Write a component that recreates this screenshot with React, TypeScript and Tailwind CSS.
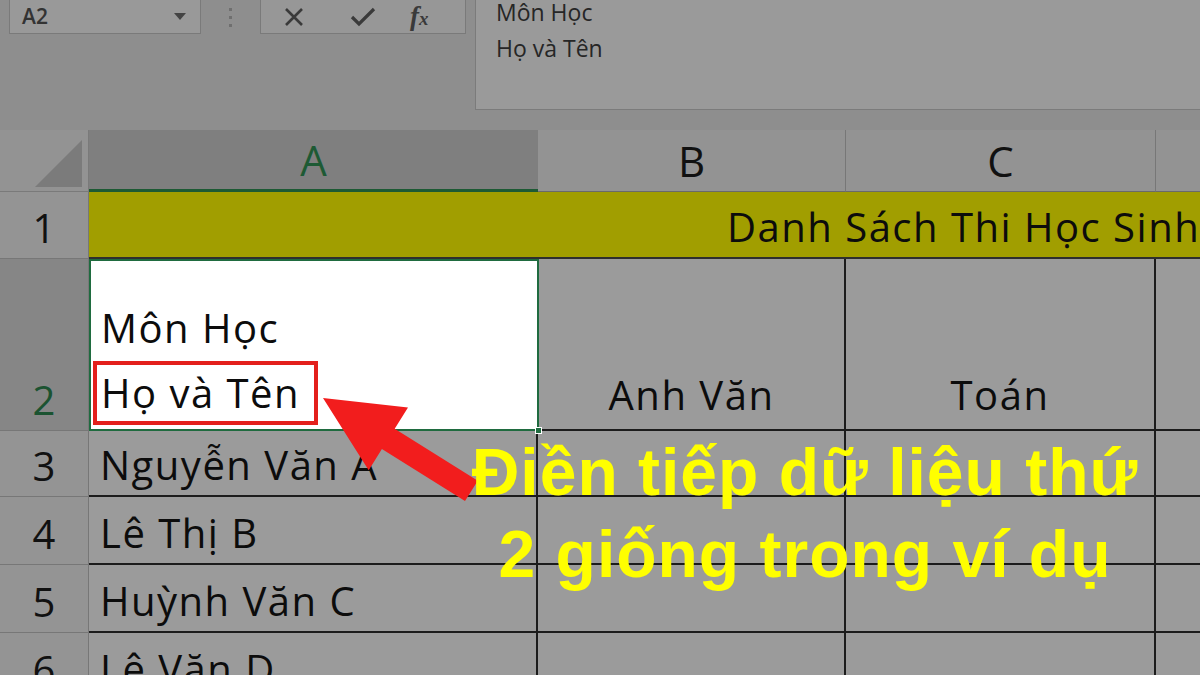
import React from "react";

// Excel grid, dimmed, with callout on top
const cellText = "text-[40px] tracking-[1.5px] text-[#0c0c0c] leading-none";

const RowHead = ({
  n,
  selected = false,
  className = "",
}: {
  n: number;
  selected?: boolean;
  className?: string;
}) => (
  <div
    className={`w-[89px] shrink-0 flex items-end justify-center pb-[10px] border-r border-b border-[#777777] text-[40px] leading-none ${
      selected ? "bg-[#868686] text-[#1b5331]" : "bg-[#949494] text-[#111111]"
    } ${className}`}
  >
    {n}
  </div>
);

const DataRow = ({ n, name, h }: { n: number; name: string; h: string }) => (
  <div className={`flex ${h}`}>
    <RowHead n={n} />
    <div className={`w-[449px] shrink-0 bg-[#9b9b9b] border-r-2 border-b-2 border-[#1c1c1c] flex items-end pl-[11px] pb-[10px] ${cellText}`}>
      {name}
    </div>
    <div className="w-[308px] shrink-0 bg-[#9b9b9b] border-r-2 border-b-2 border-[#1c1c1c]" />
    <div className="w-[310px] shrink-0 bg-[#9b9b9b] border-r-2 border-b-2 border-[#1c1c1c]" />
    <div className="flex-1 bg-[#9b9b9b] border-b-2 border-[#1c1c1c]" />
  </div>
);

export default function App() {
  return (
    <div className="relative w-[1200px] h-[675px] overflow-hidden bg-[#8e8e8e] font-['Open_Sans',sans-serif]">
      {/* Formula bar */}
      <div className="flex h-[110px]">
        <div className="flex w-[475px] shrink-0 items-start pl-[9px]">
          <div className="w-[192px] h-[35px] -mt-px bg-[#999999] border border-[#7a7a7a] flex items-center justify-between pl-[12px] pr-[14px]">
            <span className="text-[21px] font-semibold text-[#333333] leading-none">A2</span>
            <svg width="12" height="8" viewBox="0 0 12 8">
              <polygon points="0,0 12,0 6,7" fill="#444444" />
            </svg>
          </div>
          <div className="w-[59px] h-[35px] flex flex-col items-center justify-center gap-[5px]">
            <span className="w-[3px] h-[3px] bg-[#6f6f6f]" />
            <span className="w-[3px] h-[3px] bg-[#6f6f6f]" />
            <span className="w-[3px] h-[3px] bg-[#6f6f6f]" />
          </div>
          <div className="w-[206px] h-[35px] -mt-px bg-[#979797] border border-[#7a7a7a] flex items-center pl-[22px]">
            <svg width="22" height="22" viewBox="0 0 22 22" className="mr-[45px]">
              <path d="M3 3 L19 19 M19 3 L3 19" stroke="#3a3a3a" strokeWidth="2.6" />
            </svg>
            <svg width="26" height="22" viewBox="0 0 26 22" className="mr-[34px]">
              <path d="M2 11 L9 18 L24 3" stroke="#3a3a3a" strokeWidth="3.2" fill="none" />
            </svg>
            <span className="font-['Liberation_Serif',serif] italic font-bold text-[27px] leading-none text-[#3a3a3a]">
              f<span className="text-[19px]">x</span>
            </span>
          </div>
        </div>
        <div className="flex-1 flex flex-col gap-[13px] bg-[#9a9a9a] border-l border-b border-[#7b7b7b] pl-[20px] pt-[1px] text-[23px] leading-none text-[#262626]">
          <div>Môn Học</div>
          <div>Họ và Tên</div>
        </div>
      </div>
      <div className="h-[20px]" />

      {/* Column headers */}
      <div className="flex h-[62px]">
        <div className="w-[89px] shrink-0 bg-[#939393] border-r border-b border-[#7a7a7a] flex items-end justify-end pr-[6px] pb-[4px]">
          <svg width="47" height="47" viewBox="0 0 47 47">
            <polygon points="47,0 47,47 0,47" fill="#7b7b7b" />
          </svg>
        </div>
        <div className="w-[449px] shrink-0 bg-[#7f7f7f] border-b-[3px] border-[#1d5a34] flex items-center justify-center text-[42px] leading-none text-[#1d5a34]">
          A
        </div>
        <div className="w-[308px] shrink-0 bg-[#939393] border-r border-[#777777] border-b border-b-[#6a6a6a] flex items-center justify-center text-[42px] leading-none text-[#111111]">
          B
        </div>
        <div className="w-[310px] shrink-0 bg-[#939393] border-r border-[#777777] border-b border-b-[#6a6a6a] flex items-center justify-center text-[42px] leading-none text-[#111111]">
          C
        </div>
        <div className="flex-1 bg-[#939393] border-b border-[#6a6a6a]" />
      </div>

      {/* Row 1 */}
      <div className="flex h-[67px]">
        <RowHead n={1} />
        <div className={`flex-1 bg-[#a19e00] border-b-2 border-[#2e2e2e] flex items-end pl-[638px] pb-[10px] whitespace-nowrap ${cellText}`}>
          Danh Sách Thi Học Sinh
        </div>
      </div>

      {/* Row 2 */}
      <div className="flex h-[172px]">
        <RowHead n={2} selected />
        <div className="relative w-[450px] shrink-0 bg-white border-2 border-[#1f6b3f] flex flex-col justify-end pl-[2px] pb-[4px]">
          <div className={`pl-[8px] mb-[13px] ${cellText}`}>Môn Học</div>
          <div className={`self-start border-[4px] border-[#e3201c] pl-[4px] pr-[14px] pt-[8px] pb-[8px] ${cellText}`}>
            Họ và Tên
          </div>
          <span className="absolute -right-[5px] -bottom-[5px] w-[7px] h-[7px] bg-[#1f6b3f] border border-white" />
        </div>
        <div className={`w-[307px] shrink-0 bg-[#9b9b9b] border-r-2 border-b-2 border-[#1c1c1c] flex items-end justify-center pb-[14px] ${cellText}`}>
          Anh Văn
        </div>
        <div className={`w-[310px] shrink-0 bg-[#9b9b9b] border-r-2 border-b-2 border-[#1c1c1c] flex items-end justify-center pb-[14px] ${cellText}`}>
          Toán
        </div>
        <div className="flex-1 bg-[#9b9b9b] border-b-2 border-[#1c1c1c]" />
      </div>

      <DataRow n={3} name="Nguyễn Văn A" h="h-[66px]" />
      <DataRow n={4} name="Lê Thị B" h="h-[68px]" />
      <DataRow n={5} name="Huỳnh Văn C" h="h-[68px]" />
      <DataRow n={6} name="Lê Văn D" h="h-[68px]" />

      {/* Red arrow */}
      <svg className="absolute inset-0 pointer-events-none" width="1200" height="675" viewBox="0 0 1200 675">
        <polygon
          points="323,398 408,407.5 394.7,428.7 477.8,480.7 465,501.1 381.9,449.1 368.7,470.3"
          fill="#f21d1d"
        />
      </svg>

      {/* Callout text */}
      <div className="absolute left-[455px] top-[431px] w-[700px] text-center font-['Liberation_Sans',Arial,sans-serif] font-bold text-[66px] leading-[82px] tracking-[1px] text-[#ffff00] whitespace-nowrap">
        <div>Điền tiếp dữ liệu thứ</div>
        <div>2 giống trong ví dụ</div>
      </div>
    </div>
  );
}
